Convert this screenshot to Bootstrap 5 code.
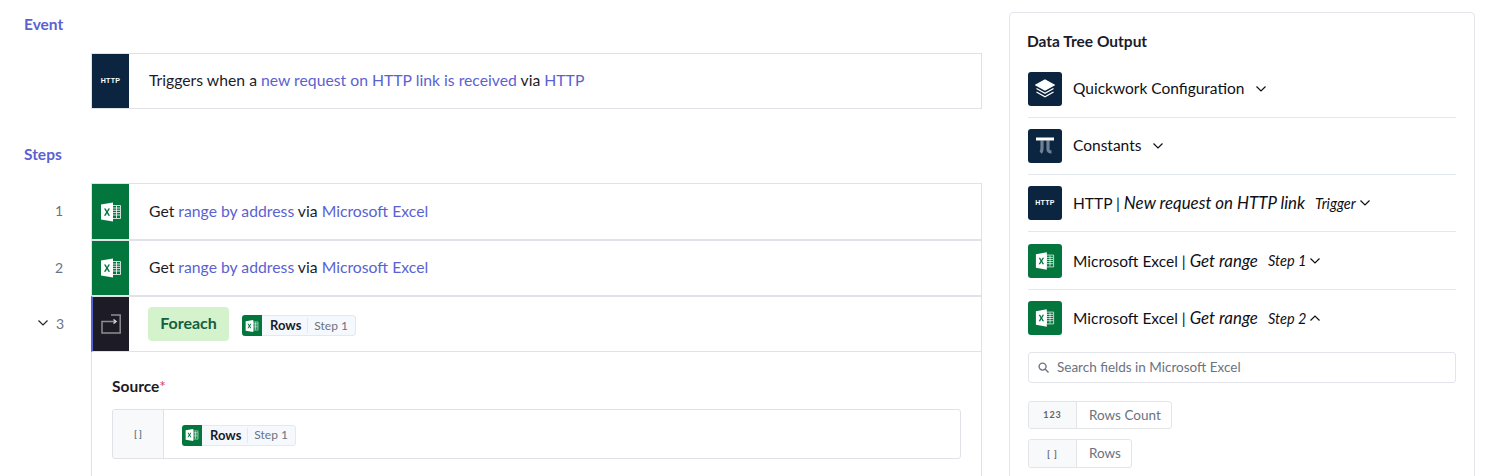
<!DOCTYPE html>
<html lang="en">
<head>
    <meta charset="utf-8" />
    <title>Workflow</title>
    <link href="https://cdn.jsdelivr.net/npm/bootstrap@5.3.3/dist/css/bootstrap.min.css" rel="stylesheet" />
    <style>
        html, body { height: 476px; overflow: hidden; }
        body { font-family: Lato, "Liberation Sans", sans-serif; font-size: 15.75px; color: #1b1b2a; background: #fff; }
        .page-wrap { padding: 12px 14px 0 24px; gap: 27px; }
        .flow-col { width: 958px; flex: none; }
        .sec-title { color: #5a62d2; font-weight: 700; font-size: 15.5px; line-height: 20px; }
        .event-title { margin: 2px 0 19px; }
        .steps-title { margin: 35px 0 19px; }
        .step-line { height: 56px; margin-left: 67px; border: 1px solid #e0e2e8; position: relative; }
        .first-line { height: 57px; }
        .step-num { position: absolute; left: -67px; width: 38px; top: 0; bottom: 2px; text-align: right; color: #6b7280; font-size: 14px; display: flex; align-items: center; justify-content: flex-end; gap: 7px; }
        .tile { width: 37px; flex: none; align-self: stretch; display: flex; align-items: center; justify-content: center; }
        .tile-http { background: #0b2540; }
        .tile-xls { background: #02763c; }
        .tile-loop { background: #1d1c26; }
        .http-txt { color: #fff; font-size: 7px; font-weight: 700; letter-spacing: .3px; font-family: "Liberation Sans", sans-serif; }
        .step-txt { padding: 0 0 2px 20px; }
        .hl { color: #5a62d2; }
        .active-line { border-left: 2px solid #5a62d2; }
        .active-line .tile { width: 36px; }
        .foreach-tag { background: #d4f3cd; color: #14603f; font-weight: 700; font-size: 16px; border-radius: 4px; height: 34px; width: 81px; margin: 0 13px 0 19px; padding-bottom: 2px; display: flex; align-items: center; justify-content: center; }
        .pill-ref { display: inline-flex; align-items: center; height: 21px; margin-top: 3px; background: #f5f8fc; border: 1px solid #e4e8ef; border-radius: 3px; font-size: 13px; }
        .pill-ico { width: 20px; height: 21px; margin: -1px 0 -1px -1px; background: #02763c; border-radius: 3px 0 0 3px; display: flex; align-items: center; justify-content: center; }
        .pill-name { font-weight: 700; padding: 0 6px 0 8px; border-right: 1px solid #e4e8ef; line-height: 15px; color: #1b1b2a; }
        .pill-step { color: #6b7280; font-size: 12px; padding: 0 7px 0 6px; }
        .step-body { margin-left: 67px; height: 130px; border-left: 1px solid #e0e2e8; border-right: 1px solid #e0e2e8; padding: 24px 20px 0 20px; }
        .src-label { font-weight: 700; font-size: 15.5px; line-height: 20px; margin-bottom: 13px; }
        .req-star { color: #e0436b; font-weight: 400; }
        .src-field { height: 50px; border: 1px solid #e0e2e8; border-radius: 3px; }
        .src-type { width: 51px; flex: none; background: #f8f9fa; border-right: 1px solid #e0e2e8; color: #4f7186; font-size: 9px; font-weight: 700; display: flex; align-items: center; justify-content: center; border-radius: 3px 0 0 3px; }
        .src-value { padding: 2px 0 0 18px; }
        .tree-panel { width: 466px; flex: none; height: 480px; border: 1px solid #e3e5ea; border-radius: 4px; padding: 17px 18px 0 18px; }
        .tree-title { font-weight: 700; font-size: 15.5px; line-height: 22px; margin: 0 0 9px -1px; }
        .tree-line { border-bottom: 1px solid #e3e7ee; height: 57px; color: #0f0f18; font-size: 15.5px; }
        .tree-line em { font-size: 1.09em; }
        .tall-line { height: 58px; }
        .last-line { border-bottom: 0; height: 56px; margin-bottom: 6px; }
        .tree-ico { width: 34px; height: 34px; margin-right: 11px; border-radius: 3px; flex: none; display: flex; align-items: center; justify-content: center; }
        .tree-tag { font-size: 14.5px; font-style: italic; margin: 1px 3px 0 10px; }
        .chev-gap { margin-left: 11px; }
        .search-box { height: 31px; border: 1px solid #e3e5ea; border-radius: 3px; margin-bottom: 17px; padding-left: 9px; gap: 8px; color: #6b7280; font-size: 13.5px; }
        .field-chip { height: 28px; border: 1px solid #e3e5ea; border-radius: 3px; color: #6b7280; font-size: 13.5px; margin-bottom: 10px; }
        .tall-chip { height: 29px; }
        .chip-type { width: 48px; background: #f8f9fa; border-right: 1px solid #e3e5ea; color: #5d6470; font-size: 9px; font-weight: 700; letter-spacing: 1px; align-self: stretch; display: flex; align-items: center; justify-content: center; border-radius: 3px 0 0 3px; }
        .chip-label { padding: 0 10px 0 12px; }
    </style>
</head>
<body>
<svg width="0" height="0" class="position-absolute">
    <symbol id="xls" viewBox="0 0 22 22">
        <path d="M12.5 4.500h8v13h-8z" fill="none" stroke="#fff" stroke-width=".8"/>
        <path d="M13 7h7M13 9.300h7M13 11.600h7M13 14h7M16.500 5v12" stroke="#fff" stroke-width=".8"/>
        <path d="M1 3.500 13 1.500v19l-12-2z" fill="#fff"/>
        <path d="M4 7.500h1.700l1.300 2.400 1.300-2.400H10l-2.100 3.500 2.100 3.700H8.300L7 12.200l-1.300 2.500H4l2.100-3.700z" fill="#02763c"/>
    </symbol>
    <symbol id="chev-down" viewBox="0 0 12 8">
        <path d="M1.500 1.500 6 6l4.500-4.500" fill="none" stroke="currentColor" stroke-width="1.200"/>
    </symbol>
    <symbol id="chev-up" viewBox="0 0 12 8">
        <path d="M1.500 6.500 6 2l4.500 4.500" fill="none" stroke="currentColor" stroke-width="1.200"/>
    </symbol>
</svg>

<div class="page-wrap d-flex">
    <div class="flow-col">
        <div class="sec-title event-title">Event</div>
        <div class="step-line d-flex align-items-center">
            <div class="tile tile-http"><span class="http-txt">HTTP</span></div>
            <div class="step-txt">Triggers when a <span class="hl">new request on HTTP link is received</span> via <span class="hl">HTTP</span></div>
        </div>

        <div class="sec-title steps-title">Steps</div>

        <div class="step-line first-line d-flex align-items-center">
            <div class="step-num">1</div>
            <div class="tile tile-xls"><svg width="22" height="22"><use href="#xls"/></svg></div>
            <div class="step-txt">Get <span class="hl">range by address</span> via <span class="hl">Microsoft Excel</span></div>
        </div>
        <div class="step-line d-flex align-items-center">
            <div class="step-num">2</div>
            <div class="tile tile-xls"><svg width="22" height="22"><use href="#xls"/></svg></div>
            <div class="step-txt">Get <span class="hl">range by address</span> via <span class="hl">Microsoft Excel</span></div>
        </div>
        <div class="step-line active-line d-flex align-items-center">
            <div class="step-num"><svg width="12" height="8" class="text-dark"><use href="#chev-down"/></svg>3</div>
            <div class="tile tile-loop">
                <svg width="22" height="22" viewBox="0 0 22 22" fill="none" stroke="#8d8d94" stroke-width="1.500">
                    <path d="M11 2h9.200v18H2V8.500h13"/>
                    <path d="M13.500 6.500 16 8.500l-2.500 2" stroke="#d8d8dc"/>
                </svg>
            </div>
            <div class="foreach-tag">Foreach</div>
            <span class="pill-ref">
                <span class="pill-ico"><svg width="14" height="14"><use href="#xls"/></svg></span>
                <span class="pill-name">Rows</span><span class="pill-step">Step 1</span>
            </span>
        </div>
        <div class="step-body">
            <div class="src-label">Source<span class="req-star">*</span></div>
            <div class="src-field d-flex align-items-center">
                <div class="src-type align-self-stretch">[ ]</div>
                <div class="src-value">
                    <span class="pill-ref">
                        <span class="pill-ico"><svg width="14" height="14"><use href="#xls"/></svg></span>
                        <span class="pill-name">Rows</span><span class="pill-step">Step 1</span>
                    </span>
                </div>
            </div>
        </div>
    </div>

    <div class="tree-panel">
        <div class="tree-title">Data Tree Output</div>

        <div class="tree-line d-flex align-items-center">
            <div class="tree-ico tile-http">
                <svg width="20" height="20" viewBox="0 0 20 20" fill="none" stroke="#fff" stroke-width="1.300">
                    <path d="M10 1 19 6l-9 5-9-5z" fill="#fff"/>
                    <path d="M1.500 9.500 10 14.300l8.500-4.800M1.500 13 10 17.800l8.500-4.800"/>
                </svg>
            </div>
            <span>Quickwork Configuration</span>
            <svg width="12" height="8" class="chev-gap"><use href="#chev-down"/></svg>
        </div>
        <div class="tree-line d-flex align-items-center">
            <div class="tree-ico tile-http">
                <svg width="20" height="20" viewBox="0 0 20 20" fill="none" stroke="#6e8095" stroke-width="3.200">
                    <path d="M7 4.500V12q0 3.500-1.500 4.500M13 4.500V13q0 3 3.500 2.800"/>
                    <path d="M1 3h18" stroke="#fff" stroke-width="3"/>
                </svg>
            </div>
            <span>Constants</span>
            <svg width="12" height="8" class="chev-gap"><use href="#chev-down"/></svg>
        </div>
        <div class="tree-line d-flex align-items-center">
            <div class="tree-ico tile-http"><span class="http-txt">HTTP</span></div>
            <span>HTTP | <em>New request on HTTP link</em></span>
            <span class="tree-tag">Trigger</span>
            <svg width="12" height="8"><use href="#chev-down"/></svg>
        </div>
        <div class="tree-line tall-line d-flex align-items-center">
            <div class="tree-ico tile-xls"><svg width="20" height="20"><use href="#xls"/></svg></div>
            <span>Microsoft Excel | <em>Get range</em></span>
            <span class="tree-tag">Step 1</span>
            <svg width="12" height="8"><use href="#chev-down"/></svg>
        </div>
        <div class="tree-line last-line d-flex align-items-center">
            <div class="tree-ico tile-xls"><svg width="20" height="20"><use href="#xls"/></svg></div>
            <span>Microsoft Excel | <em>Get range</em></span>
            <span class="tree-tag">Step 2</span>
            <svg width="12" height="8"><use href="#chev-up"/></svg>
        </div>

        <div class="search-box d-flex align-items-center">
            <svg width="11" height="11" viewBox="0 0 12 12" fill="none" stroke="#6b7280" stroke-width="1.500"><circle cx="5" cy="5" r="3.800"/><path d="m8 8 3.500 3.500"/></svg>
            <span>Search fields in Microsoft Excel</span>
        </div>
        <div class="field-chip d-inline-flex align-items-center">
            <span class="chip-type">123</span><span class="chip-label">Rows Count</span>
        </div>
        <br>
        <div class="field-chip tall-chip d-inline-flex align-items-center">
            <span class="chip-type">[ ]</span><span class="chip-label">Rows</span>
        </div>
    </div>
</div>
</body>
</html>
